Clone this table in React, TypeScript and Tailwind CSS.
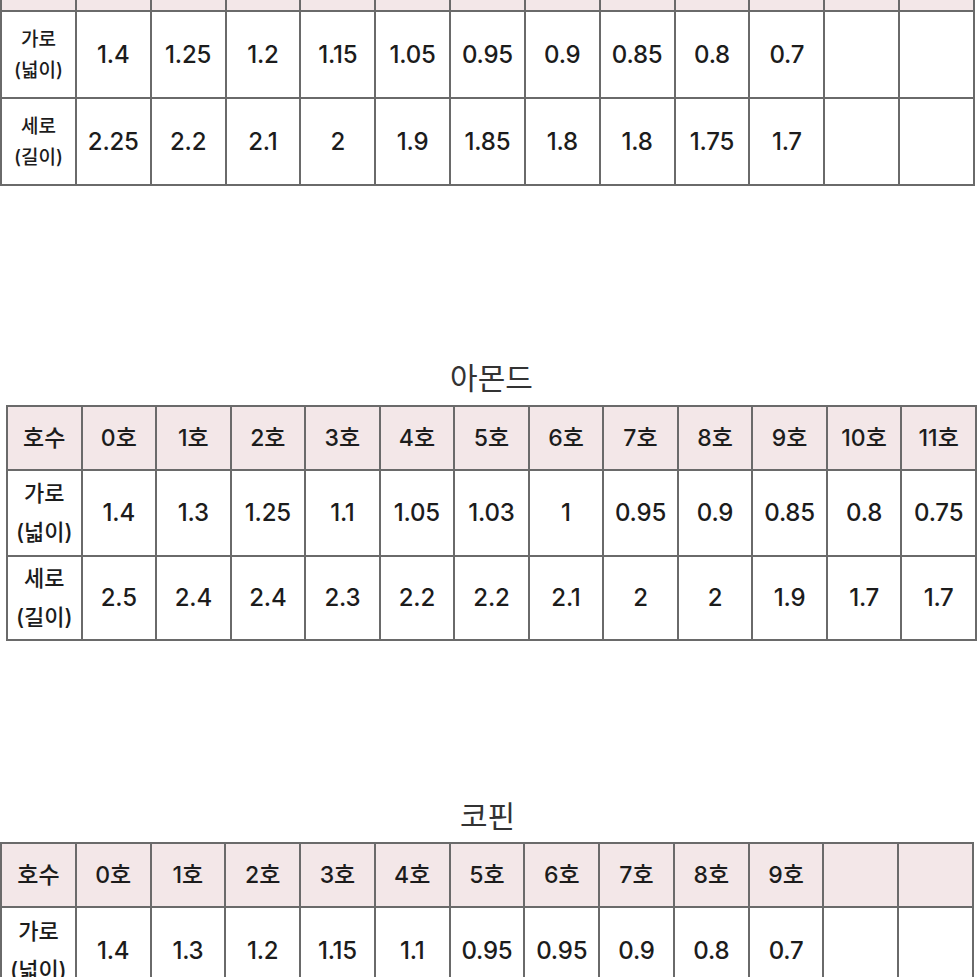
const FONT = { fontFamily: 'Inter, "Noto Sans CJK KR", sans-serif' }

type TableData = {
  head: string[]
  wide: string[]
  long: string[] | null
}

const hoNames = (n: number) => {
  const list: string[] = []
  for (let i = 0; i < 12; i++) list.push(i < n ? `${i}호` : '')
  return list
}

const fill = (values: string[]) => {
  const list = [...values]
  while (list.length < 12) list.push('')
  return list
}

const tables: Record<string, TableData> = {
  // header row of the first table sits above the screen edge
  top: {
    head: fill([]),
    wide: fill(['1.4', '1.25', '1.2', '1.15', '1.05', '0.95', '0.9', '0.85', '0.8', '0.7']),
    long: fill(['2.25', '2.2', '2.1', '2', '1.9', '1.85', '1.8', '1.8', '1.75', '1.7']),
  },
  almond: {
    head: hoNames(12),
    wide: ['1.4', '1.3', '1.25', '1.1', '1.05', '1.03', '1', '0.95', '0.9', '0.85', '0.8', '0.75'],
    long: ['2.5', '2.4', '2.4', '2.3', '2.2', '2.2', '2.1', '2', '2', '1.9', '1.7', '1.7'],
  },
  coffin: {
    head: hoNames(10),
    wide: fill(['1.4', '1.3', '1.2', '1.15', '1.1', '0.95', '0.95', '0.9', '0.8', '0.7']),
    long: null,
  },
}

const cell = 'border-2 border-[#6a6a6a] text-center align-middle p-0'
const num = 'text-[24px] font-[550] tracking-[-0.2px]'

const Label = ({ top, bottom, small }: { top: string; bottom: string; small?: boolean }) => (
  <div
    className={
      small
        ? 'flex flex-col items-center text-[19px] leading-[31px] font-medium'
        : 'flex flex-col items-center text-[22px] leading-[39px] font-medium'
    }
  >
    <span>{top}</span>
    <span>{bottom}</span>
  </div>
)

const SizeTable = ({
  data,
  className,
  small,
  rows,
}: {
  data: TableData
  className: string
  small?: boolean
  rows: string[]
}) => (
  <table className={`table-fixed border-collapse text-[#1c1c1c] ${className}`}>
    <tbody>
      <tr className={`${rows[0]} bg-[#f3e7e8]`}>
        <td className={`${cell} text-[23px] font-medium`}>{data.head.some((h) => h) ? '호수' : ''}</td>
        {data.head.map((h, i) => (
          <td key={i} className={`${cell} text-[23px] font-medium`}>
            {h}
          </td>
        ))}
      </tr>
      <tr className={`${rows[1]} bg-white`}>
        <td className={cell}>
          <Label top="가로" bottom="(넓이)" small={small} />
        </td>
        {data.wide.map((v, i) => (
          <td key={i} className={`${cell} ${num}`}>
            {v}
          </td>
        ))}
      </tr>
      {data.long && (
        <tr className={`${rows[2]} bg-white`}>
          <td className={cell}>
            <Label top="세로" bottom="(길이)" small={small} />
          </td>
          {data.long.map((v, i) => (
            <td key={i} className={`${cell} ${num}`}>
              {v}
            </td>
          ))}
        </tr>
      )}
    </tbody>
  </table>
)

const Title = ({ text, className }: { text: string; className: string }) => (
  <h2 className={`text-center text-[30px] leading-[36px] font-normal text-[#333] ${className}`}>{text}</h2>
)

export default function App() {
  return (
    <div className="h-[977px] w-[977px] overflow-hidden bg-white" style={FONT}>
      <SizeTable
        data={tables.top}
        small
        rows={['h-[64px]', 'h-[87px]', 'h-[87px]']}
        className="-mt-[54px] w-[975px]"
      />

      <Title text="아몬드" className="mt-[174px] ml-[6px] w-[971px]" />
      <SizeTable
        data={tables.almond}
        rows={['h-[64px]', 'h-[86px]', 'h-[84px]']}
        className="mt-[9px] ml-[6px] w-[971px]"
      />

      <Title text="코핀" className="mt-[157px] w-[975px]" />
      <SizeTable
        data={tables.coffin}
        rows={['h-[64px]', 'h-[87px]', 'h-[87px]']}
        className="mt-[8px] w-[974px]"
      />
    </div>
  )
}
